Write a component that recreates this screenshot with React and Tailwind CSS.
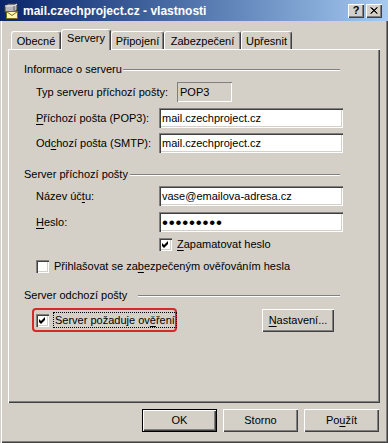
import React from 'react';

const raised = 'shadow-[inset_1px_1px_#fff,inset_-1px_-1px_#404040,inset_-2px_-2px_#808080]';
const sunken = 'shadow-[inset_1px_1px_#808080,inset_2px_2px_#404040,inset_-1px_-1px_#fff,inset_-2px_-2px_#d4d0c8]';

const U = ({ children }) => <span className="underline underline-offset-[2px]">{children}</span>;

const MailIcon = () => (
  <svg width="16" height="16" viewBox="0 0 16 16" className="shrink-0">
    <path d="M2 3 L5 1 L14 1 L14 7 L11 9 L2 9 Z" fill="#b8b8b8" stroke="#404040" strokeWidth="1" />
    <path d="M2 3 L11 3 L14 1" fill="none" stroke="#f0f0f0" strokeWidth="1" />
    <path d="M11 3 L11 9" stroke="#606060" strokeWidth="1" />
    <rect x="3.5" y="8.5" width="11" height="7" fill="#fff7b0" stroke="#7a6a20" />
    <path d="M3.5 8.5 L9 12.5 L14.5 8.5" fill="none" stroke="#7a6a20" />
  </svg>
);

const Check = ({ checked }) => (
  <span className={`w-[13px] h-[13px] bg-white shrink-0 flex ${sunken}`}>
    {checked && (
      <svg width="13" height="13" viewBox="0 0 13 13">
        <polygon points="3,5 5,7 9,3 9,6 5,10 3,8" fill="#000" />
      </svg>
    )}
  </span>
);

const TextBox = ({ children }) => (
  <div className={`w-[184px] h-[20px] bg-white flex items-center pl-[3px] whitespace-nowrap ${sunken}`}>{children}</div>
);

const Heading = ({ label, w }) => (
  <div className="flex items-center h-[13px] pl-[16px] w-[332px]">
    <span className={`${w} shrink-0 leading-none whitespace-nowrap`}>{label}</span>
    <div className="flex-1 border-t border-t-[#808080] border-b border-b-white" />
  </div>
);

const FieldRow = ({ label, children, mt }) => (
  <div className={`flex items-center h-[20px] pl-[28px] ${mt}`}>
    <span className="w-[123px] shrink-0 leading-none whitespace-nowrap">{label}</span>
    {children}
  </div>
);

const Tab = ({ label, w, selected }) =>
  selected ? (
    <div className={`${w} h-[21px] -mb-px relative z-10 bg-[#d4d0c8] border-t border-l border-white rounded-t-[3px] border-r border-r-[#404040] shadow-[inset_-1px_0_#808080] flex justify-center pt-[3px] leading-none whitespace-nowrap`}>
      {label}
    </div>
  ) : (
    <div className={`${w} h-[18px] border-t border-l border-white rounded-t-[3px] border-r border-r-[#404040] shadow-[inset_-1px_0_#808080] flex justify-center pt-[4px] leading-none whitespace-nowrap`}>
      {label}
    </div>
  );

const Button = ({ children, def, w = 'w-[75px]', h = 'h-[23px]' }) => (
  <div className={`${w} ${h} flex items-center justify-center bg-[#d4d0c8] leading-none whitespace-nowrap ${def ? 'border border-black' : ''} ${raised}`}>
    {children}
  </div>
);

export default function App() {
  return (
    <div className="w-[388px] h-[443px] bg-[#d4d0c8] text-black text-[11px] font-['Liberation_Sans',Arial,sans-serif] flex flex-col overflow-hidden">
      {/* title bar */}
      <div className="h-[21px] bg-linear-to-r from-[#0a246a] to-[#a6caf0] flex items-center pl-[3px] pr-[6px]">
        <MailIcon />
        <span className="ml-[4px] text-white font-bold text-[12px] leading-none">mail.czechproject.cz - vlastnosti</span>
        <div className="ml-auto flex gap-[2px]">
          <div className={`w-[16px] h-[14px] bg-[#d4d0c8] flex items-center justify-center font-bold text-[11px] leading-none ${raised}`}>?</div>
          <div className={`w-[16px] h-[14px] bg-[#d4d0c8] flex items-center justify-center ${raised}`}>
            <svg width="8" height="7" viewBox="0 0 8 7">
              <path d="M0.5 0.5 L7 6.5 M1.5 0.5 L7.5 6.5 M7 0.5 L0.5 6.5 M7.5 0.5 L1 6.5" stroke="#000" strokeWidth="1" />
            </svg>
          </div>
        </div>
      </div>

      {/* body */}
      <div className="flex-1 flex flex-col px-[8px] shadow-[inset_1px_0_#d4d0c8,inset_2px_0_#fff,inset_-1px_-1px_#404040,inset_-2px_-2px_#808080]">
        <div className="mt-[8px] h-[20px] flex items-end pl-[3px]">
          <Tab label="Obecné" w="w-[50px]" />
          <Tab label="Servery" w="w-[50px]" selected />
          <Tab label="Připojení" w="w-[53px]" />
          <Tab label="Zabezpečení" w="w-[77px]" />
          <Tab label="Upřesnit" w="w-[51px]" />
        </div>

        <div className={`h-[354px] flex flex-col ${raised}`}>
          <div className="mt-[14px]">
            <Heading label="Informace o serveru" w="w-[99px]" />
          </div>
          <div className="flex items-center h-[20px] pl-[28px] mt-[6px]">
            <span className="w-[141px] shrink-0 leading-none whitespace-nowrap">Typ serveru příchozí pošty:</span>
            <div className="w-[55px] h-[20px] flex items-center pl-[3px] shadow-[inset_1px_1px_#808080,inset_-1px_-1px_#fff]">POP3</div>
          </div>
          <FieldRow mt="mt-[6px]" label={<><U>P</U>říchozí pošta (POP3):</>}>
            <TextBox>mail.czechproject.cz</TextBox>
          </FieldRow>
          <FieldRow mt="mt-[5px]" label={<>Od<U>c</U>hozí pošta (SMTP):</>}>
            <TextBox>mail.czechproject.cz</TextBox>
          </FieldRow>

          <div className="mt-[15px]">
            <Heading label="Server příchozí pošty" w="w-[106px]" />
          </div>
          <FieldRow mt="mt-[5px]" label={<>Název úč<U>t</U>u:</>}>
            <TextBox>vase@emailova-adresa.cz</TextBox>
          </FieldRow>
          <FieldRow mt="mt-[6px]" label={<><U>H</U>eslo:</>}>
            <TextBox>
              <span className="text-[17px] leading-none tracking-[0.8px]">•••••••••</span>
            </TextBox>
          </FieldRow>
          <div className="flex items-center h-[13px] pl-[151px] mt-[6px]">
            <Check checked />
            <span className="ml-[5px] leading-none whitespace-nowrap"><U>Z</U>apamatovat heslo</span>
          </div>
          <div className="flex items-center h-[13px] pl-[28px] mt-[9px]">
            <Check />
            <span className="ml-[5px] leading-none whitespace-nowrap">Přihlašovat se za<U>b</U>ezpečeným ověřováním hesla</span>
          </div>

          <div className="mt-[16px]">
            <Heading label="Server odchozí pošty" w="w-[114px]" />
          </div>
          <div className="flex items-center h-[24px] pl-[24px] mt-[6px]">
            <div className="w-[145px] h-[24px] border-2 border-[#d42a2a] rounded-[4px] flex items-center pl-[2px]">
              <Check checked />
              <div className="ml-[4px] h-[16px] px-[1px] flex items-center border border-dotted border-black leading-none whitespace-nowrap">
                <span>Server požaduje ov<U>ě</U>ření</span>
              </div>
            </div>
            <div className="ml-[85px]">
              <Button w="w-[72px]"><span><U>N</U>astavení...</span></Button>
            </div>
          </div>
        </div>

        <div className="mt-[6px] flex justify-end gap-[6px] pr-[1px]">
          <Button def>OK</Button>
          <Button>Storno</Button>
          <Button><span>Po<U>u</U>žít</span></Button>
        </div>
      </div>
    </div>
  );
}
